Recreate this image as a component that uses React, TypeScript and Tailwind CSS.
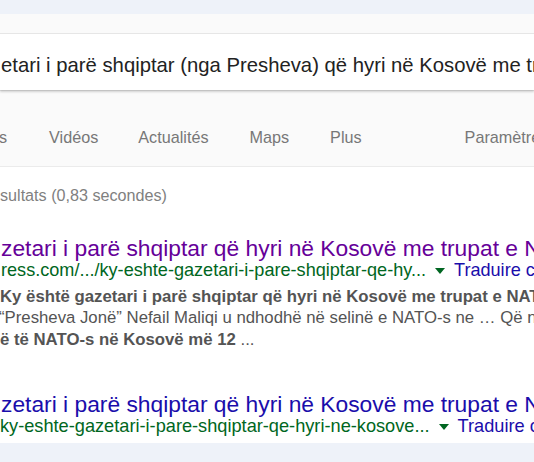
export default function App() {
  const tri = (
    <span className="inline-block align-middle ml-[9px] mr-[9px] w-0 h-0 border-t-[6px] border-l-[5px] border-r-[5px] border-t-[#006621] border-l-transparent border-r-transparent" />
  );
  return (
    <div className="w-[534px] h-[462px] overflow-hidden flex flex-col bg-white font-['Liberation_Sans',Arial,sans-serif] whitespace-nowrap">
      <div className="h-[14px] shrink-0 bg-[#eef2f9]" />
      <div className="shrink-0 bg-[#fafafa] pt-[20px] border-b border-[#ebebeb]">
        <div className="h-[56px] bg-white shadow-[0_2px_2px_rgba(0,0,0,0.16),0_0_0_1px_rgba(0,0,0,0.08)] pt-[19px] pl-[1px] overflow-hidden">
          <div className="text-[20.3px] leading-[24px] text-[#222]">
            etari i parë shqiptar (nga Presheva) që hyri në Kosovë me trupat e NATO
          </div>
        </div>
        <div className="h-[76px] pt-[37px] flex text-[16.2px] leading-[20px] text-[#777] overflow-hidden">
          <span className="-ml-[46px]">Images</span>
          <span className="ml-[42px]">Vidéos</span>
          <span className="ml-[40px]">Actualités</span>
          <span className="ml-[41px]">Maps</span>
          <span className="ml-[41px]">Plus</span>
          <span className="ml-[103px]">Paramètres</span>
        </div>
      </div>
      <div className="pt-[18px] text-[16.15px] leading-[20px] text-[#808080]">
        sultats (0,83 secondes)
      </div>
      <div className="mt-[31px] pl-[1px] text-[22.8px] leading-[24px] text-[#660099]">
        zetari i parë shqiptar që hyri në Kosovë me trupat e NATO-s
      </div>
      <div className="text-[18.1px] leading-[21px] pl-[1px]">
        <span className="text-[#006621]">ress.com/.../ky-eshte-gazetari-i-pare-shqiptar-qe-hy...</span>
        {tri}
        <span className="text-[#1a0dab]">Traduire cette page</span>
      </div>
      <div className="mt-[4.5px] text-[16.75px] leading-[21.5px] text-[#545454]">
        <div className="font-bold">Ky është gazetari i parë shqiptar që hyri në Kosovë me trupat e NATO</div>
        <div className="-ml-[1px]">“Presheva Jonë” Nefail Maliqi u ndhodhë në selinë e NATO-s ne … Që nga</div>
        <div>
          <span className="font-bold">ë të NATO-s në Kosovë më 12</span> ...
        </div>
      </div>
      <div className="mt-[42px] pl-[1px] text-[22.8px] leading-[24px] text-[#1a0dab]">
        zetari i parë shqiptar që hyri në Kosovë me trupat e NATO-s
      </div>
      <div className="text-[18.2px] leading-[21px]">
        <span className="text-[#006621]">ky-eshte-gazetari-i-pare-shqiptar-qe-hyri-ne-kosove...</span>
        {tri}
        <span className="text-[#1a0dab]">Traduire cette page</span>
      </div>
      <div className="mt-auto h-[19px] shrink-0 bg-[#eef2f9]" />
    </div>
  );
}
